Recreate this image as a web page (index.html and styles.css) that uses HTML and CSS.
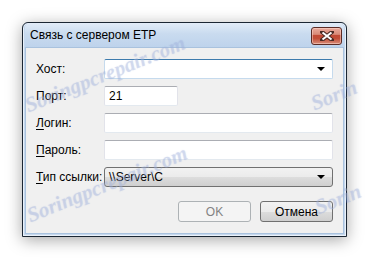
FILE: index.html
```html
<!DOCTYPE html>
<html lang="ru">
<head>
  <meta charset="UTF-8" />
  <title>Связь с сервером FTP</title>
  <link rel="stylesheet" href="styles.css">
</head>
<body>

  <div class="window">
    <div class="titlebar">
      <span class="title">Связь с сервером ETP</span>
      <button class="close" title="Закрыть">
        <svg width="14" height="10" viewBox="0 0 14 10">
          <path d="M2 1 L12 9 M12 1 L2 9" stroke="#4a2a24" stroke-width="4" stroke-linecap="square"/>
          <path d="M2.5 1.5 L11.5 8.5 M11.5 1.5 L2.5 8.5" stroke="#fff" stroke-width="2"/>
        </svg>
      </button>
    </div>

    <div class="client">
      <div class="form">
        <label>Хост:</label>
        <div class="combo edit focused"><span class="arrow"></span></div>

        <label>Порт:</label>
        <input class="field short" type="text" value="21" />

        <label><u>Л</u>огин:</label>
        <input class="field" type="text" />

        <label><u>П</u>ароль:</label>
        <input class="field" type="password" />

        <label><u>Т</u>ип ссылки:</label>
        <div class="combo list"><span class="value">\\Server\C</span><span class="arrow"></span></div>
      </div>

      <div class="buttons">
        <button class="btn" disabled>OK</button>
        <button class="btn">Отмена</button>
      </div>
    </div>
  </div>

  <div class="mark m1">Soringpcrepair.com</div>
  <div class="mark m2">Soringpcrepair.com</div>
  <div class="mark m3">Sorin</div>
  <div class="mark m4">Sorin</div>

</body>
</html>
```

FILE: styles.css
```css
body {
  margin: 0;
  background: #fff;
  font-family: 'Liberation Sans', Arial, sans-serif;
  font-size: 12px;
  color: #000;
  position: relative;
  width: 370px;
  height: 260px;
  overflow: hidden;
}

.window {
  margin: 22px 0 0 22px;
  width: 325px;
  height: 215px;
  box-sizing: border-box;
  border: 1px solid #1b2633;
  border-radius: 6px 6px 0 0;
  background: #c5d8ee;
  padding: 0 2px 2px 2px;
  display: flex;
  flex-direction: column;
  box-shadow: 0 3px 16px rgba(0, 0, 0, 0.35), inset 0 0 0 1px #e9f1fa;
}

.titlebar {
  height: 24px;
  display: flex;
  align-items: center;
  justify-content: space-between;
  padding: 0 2px 0 5px;
  border-radius: 5px 5px 0 0;
  background: linear-gradient(#e2ecf8, #c9dbef 45%, #bed3ec);
}

.title {
  color: #000;
  font-size: 12px;
}

.close {
  width: 31px;
  height: 18px;
  margin-top: 1px;
  padding: 0;
  border: 1px solid #5b2b25;
  border-radius: 3px;
  background: linear-gradient(#e9aa9c, #d88a78 40%, #c24a35 45%, #c14d37 65%, #d98e7b);
  display: flex;
  align-items: center;
  justify-content: center;
  box-shadow: inset 0 0 0 1px rgba(255, 220, 210, 0.5);
}

.client {
  flex: 1;
  background: #f0f0f0;
  border: 1px solid #a9c2de;
  padding: 11px 10px 0 10px;
}

.form {
  display: grid;
  grid-template-columns: 68px 1fr;
  grid-auto-rows: 20px;
  row-gap: 7px;
  align-items: center;
}

label {
  line-height: 20px;
  white-space: nowrap;
}

u {
  text-decoration-thickness: 1px;
  text-underline-offset: 2px;
}

.field,
.combo {
  box-sizing: border-box;
  height: 20px;
  width: 100%;
  margin: 0;
  font: inherit;
  border: 1px solid #e2e3ea;
  border-top-color: #abadb3;
  border-bottom-color: #e3e9ef;
  border-radius: 2px;
  background: #fff;
  padding: 0 4px;
  outline: none;
}

.field.short {
  width: 74px;
}

.combo {
  display: flex;
  align-items: center;
  justify-content: space-between;
}

.combo.focused {
  border-color: #c5daed;
  border-top-color: #3d7bad;
}

.combo.list {
  border: 1px solid #707070;
  border-radius: 3px;
  background: linear-gradient(#f2f2f2, #ebebeb 50%, #dddddd 51%, #cfcfcf);
}

.combo .arrow {
  margin-left: auto;
  margin-right: 3px;
  width: 0;
  height: 0;
  border-left: 4px solid transparent;
  border-right: 4px solid transparent;
  border-top: 4px solid #000;
}

.buttons {
  display: flex;
  justify-content: flex-end;
  gap: 9px;
  margin-top: 14px;
}

.btn {
  width: 73px;
  height: 21px;
  font: inherit;
  color: #000;
  border: 1px solid #707070;
  border-radius: 3px;
  background: linear-gradient(#f2f2f2, #ebebeb 50%, #dddddd 51%, #cfcfcf);
  padding: 0;
}

.btn:disabled {
  color: #838383;
  border-color: #adb2b5;
  background: #f4f4f4;
}

.mark {
  position: absolute;
  font-family: 'Liberation Serif', serif;
  font-style: italic;
  font-weight: bold;
  font-size: 21px;
  color: rgba(175, 190, 228, 0.28);
  text-shadow: 0 0 1px rgba(140, 160, 210, 0.3);
  transform: rotate(-22deg);
  transform-origin: left center;
  white-space: nowrap;
  pointer-events: none;
}

.m1 { left: 26px; top: 94px; }
.m2 { left: 28px; top: 204px; }
.m3 { left: 312px; top: 92px; }
.m4 { left: 316px; top: 196px; }
```
